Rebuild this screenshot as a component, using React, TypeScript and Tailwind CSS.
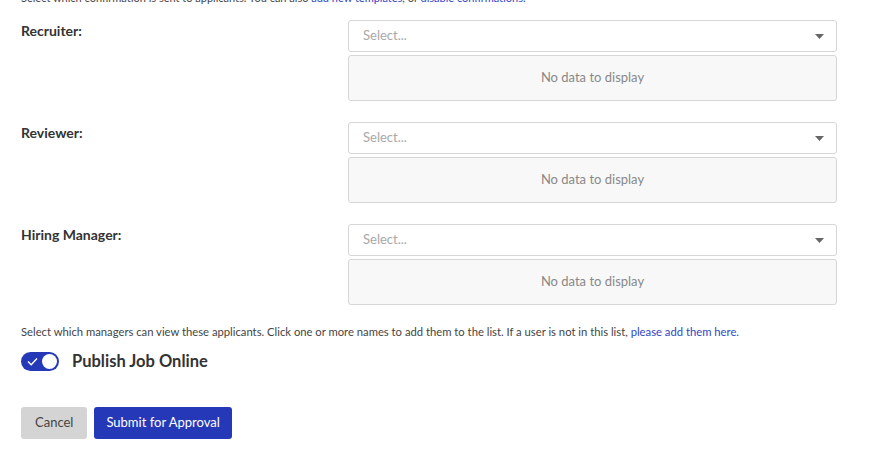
import React from 'react';

function SelectBlock({ label }: { label: string }) {
    return (
        <div className='flex'>
            <div className='w-[327px] text-[14px] font-bold text-[#333]'>{label}</div>
            <div className='flex flex-col gap-[3px] w-[489px]'>
                <div className='h-[32px] border border-[#d6d6d6] rounded-[3px] bg-white flex items-center justify-between pl-[14px] pr-[12px]'>
                    <span className='text-[13px] text-[#a8a8a8]'>Select...</span>
                    <svg width='9' height='5' viewBox='0 0 9 5'><path d='M0 0h9L4.5 5z' fill='#666' /></svg>
                </div>
                <div className='h-[46px] border border-[#d6d6d6] rounded-[3px] bg-[#f8f8f8] flex items-center justify-center'>
                    <span className='text-[13px] text-[#888]'>No data to display</span>
                </div>
            </div>
        </div>
    );
}

export default function App() {
    return (
        <main className='w-[869px] h-[461px] overflow-hidden bg-white px-[21px] font-["Lato",sans-serif]'>
            <p className='mt-[-9px] text-[11px] leading-[14px] text-[#444]'>
                Select which confirmation is sent to applicants. You can also <span className='text-[#2e45c6]'>add new templates</span>, or <span className='text-[#2e45c6]'>disable confirmations.</span>
            </p>
            <div className='mt-[15px] flex flex-col gap-[21px]'>
                <SelectBlock label='Recruiter:' />
                <SelectBlock label='Reviewer:' />
                <SelectBlock label='Hiring Manager:' />
            </div>
            <p className='mt-[20px] text-[11.25px] leading-[14px] text-[#444]'>
                Select which managers can view these applicants. Click one or more names to add them to the list. If a user is not in this list, <span className='text-[#2e45c6]'>please add them here.</span>
            </p>
            <div className='mt-[10px] flex items-center gap-[13px]'>
                <div className='w-[38px] h-[19px] rounded-full bg-[#2539b8] flex items-center justify-between pl-[6px] pr-[2px]'>
                    <svg width='11' height='9' viewBox='0 0 11 9'><path d='M1 4.5l3.2 3.2L10 1.5' stroke='white' strokeWidth='1.4' fill='none' /></svg>
                    <div className='w-[15px] h-[15px] rounded-full bg-white' />
                </div>
                <span className='text-[16.5px] font-bold text-[#333]'>Publish Job Online</span>
            </div>
            <div className='mt-[33px] flex gap-[7px]'>
                <button className='h-[32px] px-[14px] rounded-[3px] bg-[#d4d4d4] text-[13px] text-[#444]'>Cancel</button>
                <button className='h-[32px] px-[12px] rounded-[3px] bg-[#2539b8] text-[13px] text-white'>Submit for Approval</button>
            </div>
        </main>
    );
}
